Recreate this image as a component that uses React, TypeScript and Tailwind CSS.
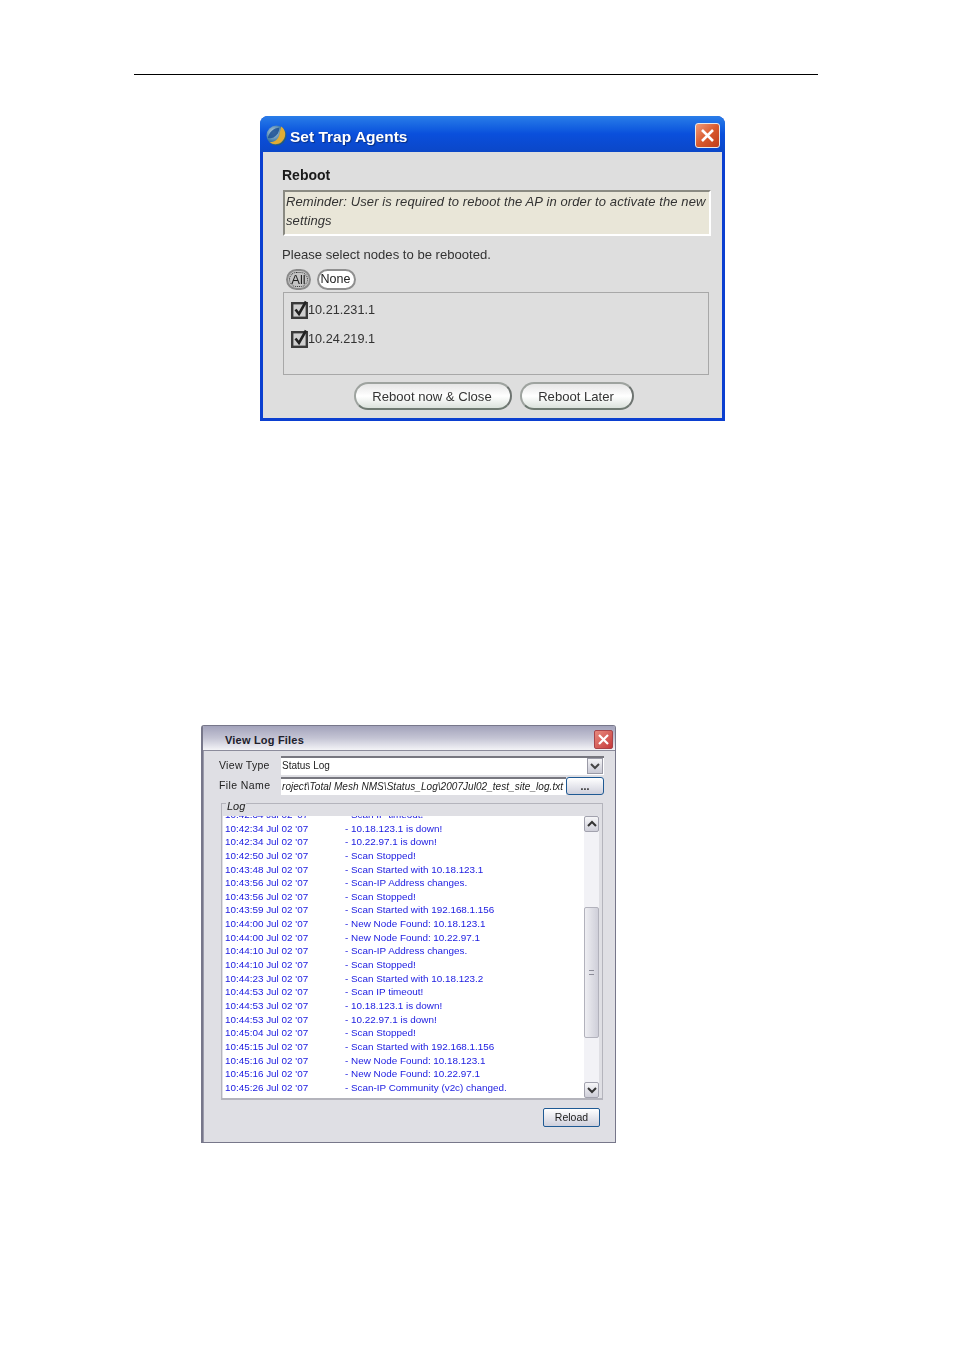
import React from "react";

const logs: [string, string][] = [
  ["10:42:34 Jul 02 '07", "- Scan IP timeout!"],
  ["10:42:34 Jul 02 '07", "- 10.18.123.1 is down!"],
  ["10:42:34 Jul 02 '07", "- 10.22.97.1 is down!"],
  ["10:42:50 Jul 02 '07", "- Scan Stopped!"],
  ["10:43:48 Jul 02 '07", "- Scan Started with 10.18.123.1"],
  ["10:43:56 Jul 02 '07", "- Scan-IP Address changes."],
  ["10:43:56 Jul 02 '07", "- Scan Stopped!"],
  ["10:43:59 Jul 02 '07", "- Scan Started with 192.168.1.156"],
  ["10:44:00 Jul 02 '07", "- New Node Found: 10.18.123.1"],
  ["10:44:00 Jul 02 '07", "- New Node Found: 10.22.97.1"],
  ["10:44:10 Jul 02 '07", "- Scan-IP Address changes."],
  ["10:44:10 Jul 02 '07", "- Scan Stopped!"],
  ["10:44:23 Jul 02 '07", "- Scan Started with 10.18.123.2"],
  ["10:44:53 Jul 02 '07", "- Scan IP timeout!"],
  ["10:44:53 Jul 02 '07", "- 10.18.123.1 is down!"],
  ["10:44:53 Jul 02 '07", "- 10.22.97.1 is down!"],
  ["10:45:04 Jul 02 '07", "- Scan Stopped!"],
  ["10:45:15 Jul 02 '07", "- Scan Started with 192.168.1.156"],
  ["10:45:16 Jul 02 '07", "- New Node Found: 10.18.123.1"],
  ["10:45:16 Jul 02 '07", "- New Node Found: 10.22.97.1"],
  ["10:45:26 Jul 02 '07", "- Scan-IP Community (v2c) changed."],
];

function Logo() {
  return (
    <svg width="21" height="21" viewBox="0 0 22 22" className="shrink-0 mb-[2px]">
      <defs>
        <radialGradient id="lg" cx="0.35" cy="0.35" r="0.8">
          <stop offset="0" stopColor="#c6d8e4" />
          <stop offset="0.55" stopColor="#3f7aa8" />
          <stop offset="1" stopColor="#1c4a56" />
        </radialGradient>
      </defs>
      <circle cx="11" cy="11" r="10.5" fill="url(#lg)" />
      <path d="M16 1.5C21 5 22 13 16 18C12 21 7 20.5 4 18C8.5 18 12.5 15.5 13.8 11C14.6 8 15 4.5 16 1.5Z" fill="#e2ac34" />
      <path d="M14 3C14 7 12 11 8 13C6 14 4 14 2 13.5C3 8 8 3 14 3Z" fill="#1a4f94" opacity="0.85" />
    </svg>
  );
}

function Check() {
  return (
    <svg width="18" height="19" viewBox="0 0 18 19" className="shrink-0">
      <rect x="1.2" y="3.2" width="14.6" height="14.6" fill="#cfcfcf" stroke="#3a3a3a" strokeWidth="2.4" />
      <path d="M4.5 9.5L8 14L15 1.5" fill="none" stroke="#222" strokeWidth="2.6" />
    </svg>
  );
}

function Pill({ label, w }: { label: string; w: string }) {
  return (
    <div className={`${w} h-[28px] pr-[2px] pt-px rounded-full border-2 border-[#9ea39f] border-r-[#6d7370] border-b-[#6f7a72] bg-gradient-to-b from-[#e6e6e6] via-white to-[#dbe2dc] flex items-center justify-center text-[13.1px] text-[#333]`}>
      {label}
    </div>
  );
}

function Dropdown() {
  return (
    <div className="w-[16px] h-[16px] mr-px bg-gradient-to-b from-[#f4f4f6] to-[#c9c9d4] border border-[#9a9aa6] flex items-center justify-center shrink-0">
      <svg width="10" height="8" viewBox="0 0 10 8"><path d="M1 2L5 6L9 2" fill="none" stroke="#444" strokeWidth="2" /></svg>
    </div>
  );
}

function ScrollBtn({ up }: { up?: boolean }) {
  return (
    <div className="h-[16px] bg-gradient-to-b from-[#f6f6f8] to-[#cfcfd9] border border-[#a2a2ae] rounded-[2px] flex items-center justify-center shrink-0">
      <svg width="10" height="8" viewBox="0 0 10 8">
        <path d={up ? "M1 6L5 2L9 6" : "M1 2L5 6L9 2"} fill="none" stroke="#333" strokeWidth="2" />
      </svg>
    </div>
  );
}

export default function App() {
  return (
    <div className="w-[954px] h-[1349px] bg-white pt-[74px] overflow-hidden font-['Liberation_Sans',Arial,sans-serif]">
      <div className="ml-[134px] w-[684px] h-px bg-black" />

      {/* Set Trap Agents */}
      <div className="ml-[260px] mt-[41px] w-[465px] h-[305px] flex flex-col rounded-t-[8px] overflow-hidden bg-[#0b3fd0] blur-[0.35px]">
        <div className="h-[36px] shrink-0 pl-[6px] pr-[5px] pt-[4px] flex items-center bg-gradient-to-b from-[#2a7de8] via-[#0a4fdc] to-[#0b47c8]">
          <Logo />
          <div className="ml-[3px] mt-[2px] text-[15.5px] font-bold text-white whitespace-nowrap [text-shadow:1px_1px_1px_#0a2f80]">
            Set Trap Agents
          </div>
          <div className="ml-auto mb-[2px] w-[25px] h-[25px] rounded-[3px] border border-[#e8e8e8] bg-gradient-to-br from-[#ef9a78] via-[#d95a2c] to-[#bf3d1c] flex items-center justify-center">
            <svg width="15" height="15" viewBox="0 0 15 15"><path d="M2 2L13 13M13 2L2 13" stroke="#fff" strokeWidth="2.6" /></svg>
          </div>
        </div>
        <div className="flex-1 mx-[3px] mb-[3px] bg-[#dedede] pl-[19px] pr-[12px] flex flex-col">
          <div className="mt-[14px] h-[18px] leading-[18px] text-[14px] font-bold text-[#1a1a1a]">Reboot</div>
          <div className="mt-[6px] ml-px w-[428px] h-[46px] bg-[#e9e6d8] border-2 border-t-[#8a8a82] border-l-[#8a8a82] border-r-white border-b-white pl-[1px] text-[13px] leading-[19px] italic text-[#333] tracking-[0.11px]">
            Reminder: User is required to reboot the AP in order to activate the new settings
          </div>
          <div className="mt-[10px] h-[18px] leading-[18px] text-[13.1px] text-[#333]">Please select nodes to be rebooted.</div>
          <div className="mt-[5px] ml-[4px] flex gap-[6px] h-[21px]">
            <div className="w-[25px] h-[21px] rounded-full border-2 border-[#8a8a8a] bg-[#c4c4c4] outline-1 outline-dotted outline-offset-[-4px] outline-[#333] flex items-center justify-center text-[13px] text-[#222]">All</div>
            <div className="w-[39px] h-[21px] pr-[2px] rounded-full border-2 border-[#8f8f8f] bg-white flex items-center justify-center text-[12.5px] text-[#222]">None</div>
          </div>
          <div className="mt-[2px] ml-px w-[426px] h-[83px] border border-[#a8a8a8] pl-[7px] pt-[7px] flex flex-col gap-[10px]">
            <div className="flex items-center h-[19px] text-[12.7px] text-[#333]"><Check /><span className="mt-[2px] -ml-px">10.21.231.1</span></div>
            <div className="flex items-center h-[19px] text-[12.7px] text-[#333]"><Check /><span className="mt-[2px] -ml-px">10.24.219.1</span></div>
          </div>
          <div className="mt-[7px] ml-[72px] flex gap-[8px]">
            <Pill label="Reboot now & Close" w="w-[158px]" />
            <Pill label="Reboot Later" w="w-[114px]" />
          </div>
        </div>
      </div>

      {/* View Log Files */}
      <div className="ml-[201px] mt-[304px] w-[415px] h-[418px] flex flex-col bg-[#dfdfe4] border-l-2 border-r border-b border-t border-[#77778a] rounded-t-[3px] overflow-hidden blur-[0.2px]">
        <div className="h-[25px] shrink-0 pl-[22px] pr-[2px] pt-[4px] flex items-center bg-gradient-to-b from-[#a3a3bb] via-[#c4c4d4] to-[#f4f4f7] border-b border-[#8b8b9b]">
          <span className="text-[11px] font-bold text-[#20202c] tracking-[0.2px]">View Log Files</span>
          <div className="ml-auto mb-[2px] w-[19px] h-[19px] rounded-[2px] border border-[#a8444a] bg-gradient-to-br from-[#e8897e] to-[#c5383c] flex items-center justify-center">
            <svg width="13" height="13" viewBox="0 0 13 13"><path d="M2 2L11 11M11 2L2 11" stroke="#fff" strokeWidth="2.2" /></svg>
          </div>
        </div>
        <div className="flex-1 border-l border-[#9b9bab] pl-[15px] pr-[11px] flex flex-col text-[10.5px] text-[#222]">
          <div className="mt-[5px] h-[19px] flex items-center">
            <div className="w-[62px] tracking-[0.3px] shrink-0">View Type</div>
            <div className="flex-1 h-[19px] flex bg-white border-t-2 border-[#77777f]">
              <div className="flex-1 pl-px leading-[16px] text-[10px]">Status Log</div>
              <Dropdown />
            </div>
          </div>
          <div className="mt-[2px] h-[18px] flex items-center">
            <div className="w-[62px] tracking-[0.4px] shrink-0">File Name</div>
            <div className="w-[285px] h-[18px] bg-white border-t-2 border-[#77777f] italic text-[10px] tracking-[0.05px] leading-[16px] overflow-hidden whitespace-nowrap pl-px">
              roject\Total Mesh NMS\Status_Log\2007Jul02_test_site_log.txt
            </div>
            <div className="w-[38px] h-[18px] rounded-[3px] border border-[#1f5a94] bg-gradient-to-b from-white to-[#cfd0dc] flex items-center justify-center font-bold leading-none">
              ...
            </div>
          </div>
          <div className="relative mt-[8px] ml-[2px] mr-px h-[297px] border border-[#b4b4bc] border-b-2 pl-px pr-[3px] pt-[12px] flex">
            <div className="absolute left-[4px] top-[-4px] px-[1px] bg-[#dfdfe4] italic text-[11px] leading-[12px]">Log</div>
            <div className="flex-1 h-[282px] bg-white overflow-hidden text-[#1a1ae0] text-[9.9px]">
              <div className="mt-[-8px]">
                {logs.map(([t, m], i) => (
                  <div key={i} className="h-[13.65px] leading-[13.65px] flex whitespace-nowrap pl-[2px]">
                    <div className="w-[120px] shrink-0">{t}</div>
                    <div>{m}</div>
                  </div>
                ))}
              </div>
            </div>
            <div className="w-[15px] h-[282px] flex flex-col bg-[#f2f2f6]">
              <ScrollBtn up />
              <div className="h-[75px] shrink-0" />
              <div className="flex-1 bg-gradient-to-r from-[#eeeef2] to-[#cfcfd9] border border-[#b2b2bc] rounded-[2px] flex items-center justify-center">
                <div className="w-[5px] h-[5px] border-y border-[#8c8c98]" />
              </div>
              <div className="h-[44px] shrink-0" />
              <ScrollBtn />
            </div>
          </div>
          <div className="mt-[8px] ml-[324px] w-[57px] h-[19px] rounded-[2px] border border-[#1f5a94] bg-gradient-to-b from-white to-[#cfd0dc] flex items-center justify-center text-[10.5px] text-[#222]">
            Reload
          </div>
        </div>
      </div>
    </div>
  );
}
